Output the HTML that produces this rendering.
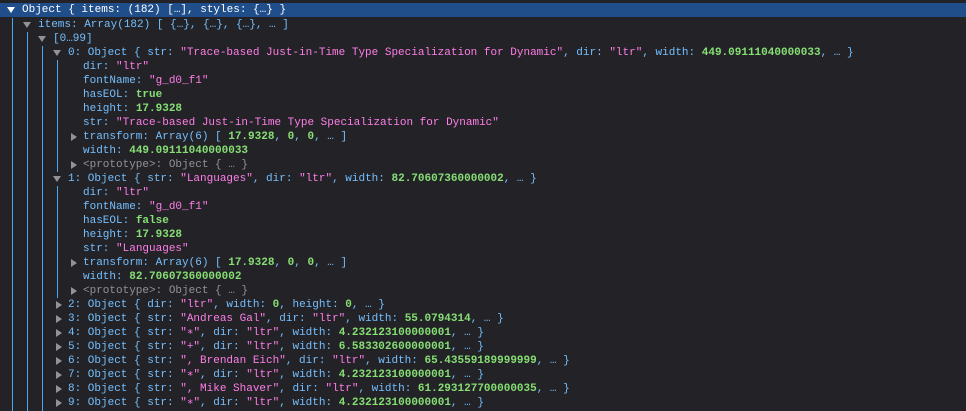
<!DOCTYPE html>
<html style="overflow:hidden;height:411px"><head><style>
body{margin:0;background:#232327;width:966px;height:411px;overflow:hidden;position:relative;font-family:"Liberation Mono",monospace;font-size:11px;}
#w{position:absolute;left:0;top:2px;width:966px;height:409px;overflow:hidden}
.r{position:absolute;left:0;right:0;height:14px;line-height:14px;white-space:pre;color:#75bfff}
.sel{background:#204e8a;color:#fff}
.a{position:absolute;top:4px;width:0;height:0}
.d{border-left:4px solid transparent;border-right:4px solid transparent;border-top:6px solid #939395;top:4px}
.sel .d{border-top-color:#fff}
.rt{border-top:4px solid transparent;border-bottom:4px solid transparent;border-left:6px solid #939395;top:3px}
.s{color:#ff7de9}.n{color:#86de74;font-weight:bold}.g{color:#939395}
.t{position:absolute;top:0}
.v{position:absolute;width:1px;background:#4aa8f0}
</style></head><body><div id="w">
<div class="v" style="left:12px;top:16px;height:393px"></div>
<div class="v" style="left:27px;top:30px;height:379px"></div>
<div class="v" style="left:42px;top:44px;height:365px"></div>
<div class="v" style="left:57px;top:58px;height:112px"></div>
<div class="v" style="left:57px;top:184px;height:112px"></div>

<div class="r sel" style="top:1px"><span class="a d" style="left:7px"></span><span class="t" style="left:22px">Object { items: (182) […], styles: {…} }</span></div>
<div class="r" style="top:16px"><span class="a d" style="left:23px"></span><span class="t" style="left:38px">items: Array(182) [ {…}, {…}, {…}, … ]</span></div>
<div class="r" style="top:30px"><span class="a d" style="left:38px"></span><span class="t" style="left:53px">[0…99]</span></div>
<div class="r" style="top:44px"><span class="a d" style="left:53px"></span><span class="t" style="left:68px">0: Object { str: <span class="s">"Trace-based Just-in-Time Type Specialization for Dynamic"</span>, dir: <span class="s">"ltr"</span>, width: <span class="n">449.09111040000033</span>, … }</span></div>
<div class="r" style="top:58px"><span class="t" style="left:83px">dir: <span class="s">"ltr"</span></span></div>
<div class="r" style="top:72px"><span class="t" style="left:83px">fontName: <span class="s">"g_d0_f1"</span></span></div>
<div class="r" style="top:86px"><span class="t" style="left:83px">hasEOL: <span class="n">true</span></span></div>
<div class="r" style="top:100px"><span class="t" style="left:83px">height: <span class="n">17.9328</span></span></div>
<div class="r" style="top:114px"><span class="t" style="left:83px">str: <span class="s">"Trace-based Just-in-Time Type Specialization for Dynamic"</span></span></div>
<div class="r" style="top:128px"><span class="a rt" style="left:71px"></span><span class="t" style="left:83px">transform: Array(6) [ <span class="n">17.9328</span>, <span class="n">0</span>, <span class="n">0</span>, … ]</span></div>
<div class="r" style="top:142px"><span class="t" style="left:83px">width: <span class="n">449.09111040000033</span></span></div>
<div class="r" style="top:156px"><span class="a rt" style="left:71px"></span><span class="t g" style="left:83px">&lt;prototype&gt;: Object { … }</span></div>
<div class="r" style="top:170px"><span class="a d" style="left:53px"></span><span class="t" style="left:68px">1: Object { str: <span class="s">"Languages"</span>, dir: <span class="s">"ltr"</span>, width: <span class="n">82.70607360000002</span>, … }</span></div>
<div class="r" style="top:184px"><span class="t" style="left:83px">dir: <span class="s">"ltr"</span></span></div>
<div class="r" style="top:198px"><span class="t" style="left:83px">fontName: <span class="s">"g_d0_f1"</span></span></div>
<div class="r" style="top:212px"><span class="t" style="left:83px">hasEOL: <span class="n">false</span></span></div>
<div class="r" style="top:226px"><span class="t" style="left:83px">height: <span class="n">17.9328</span></span></div>
<div class="r" style="top:240px"><span class="t" style="left:83px">str: <span class="s">"Languages"</span></span></div>
<div class="r" style="top:254px"><span class="a rt" style="left:71px"></span><span class="t" style="left:83px">transform: Array(6) [ <span class="n">17.9328</span>, <span class="n">0</span>, <span class="n">0</span>, … ]</span></div>
<div class="r" style="top:268px"><span class="t" style="left:83px">width: <span class="n">82.70607360000002</span></span></div>
<div class="r" style="top:282px"><span class="a rt" style="left:71px"></span><span class="t g" style="left:83px">&lt;prototype&gt;: Object { … }</span></div>
<div class="r" style="top:296px"><span class="a rt" style="left:56px"></span><span class="t" style="left:68px">2: Object { dir: <span class="s">"ltr"</span>, width: <span class="n">0</span>, height: <span class="n">0</span>, … }</span></div>
<div class="r" style="top:310px"><span class="a rt" style="left:56px"></span><span class="t" style="left:68px">3: Object { str: <span class="s">"Andreas Gal"</span>, dir: <span class="s">"ltr"</span>, width: <span class="n">55.0794314</span>, … }</span></div>
<div class="r" style="top:324px"><span class="a rt" style="left:56px"></span><span class="t" style="left:68px">4: Object { str: <span class="s">"∗"</span>, dir: <span class="s">"ltr"</span>, width: <span class="n">4.232123100000001</span>, … }</span></div>
<div class="r" style="top:338px"><span class="a rt" style="left:56px"></span><span class="t" style="left:68px">5: Object { str: <span class="s">"+"</span>, dir: <span class="s">"ltr"</span>, width: <span class="n">6.583302600000001</span>, … }</span></div>
<div class="r" style="top:352px"><span class="a rt" style="left:56px"></span><span class="t" style="left:68px">6: Object { str: <span class="s">", Brendan Eich"</span>, dir: <span class="s">"ltr"</span>, width: <span class="n">65.43559189999999</span>, … }</span></div>
<div class="r" style="top:366px"><span class="a rt" style="left:56px"></span><span class="t" style="left:68px">7: Object { str: <span class="s">"∗"</span>, dir: <span class="s">"ltr"</span>, width: <span class="n">4.232123100000001</span>, … }</span></div>
<div class="r" style="top:380px"><span class="a rt" style="left:56px"></span><span class="t" style="left:68px">8: Object { str: <span class="s">", Mike Shaver"</span>, dir: <span class="s">"ltr"</span>, width: <span class="n">61.293127700000035</span>, … }</span></div>
<div class="r" style="top:394px"><span class="a rt" style="left:56px"></span><span class="t" style="left:68px">9: Object { str: <span class="s">"∗"</span>, dir: <span class="s">"ltr"</span>, width: <span class="n">4.232123100000001</span>, … }</span></div>
</div></body></html>
